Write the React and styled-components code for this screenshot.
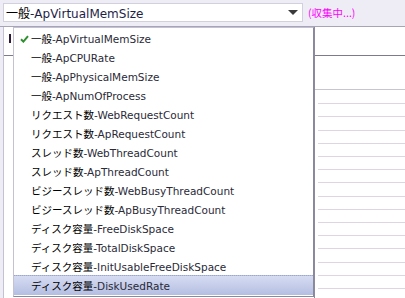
import styled, { createGlobalStyle } from "styled-components";

const GlobalStyle = createGlobalStyle`
  html, body {
    margin: 0;
    padding: 0;
    background: #ffffff;
  }
  body {
    font-family: "DejaVu Sans", "Noto Sans CJK JP", sans-serif;
  }
`;

const items = [
  ["一般", "ApVirtualMemSize"],
  ["一般", "ApCPURate"],
  ["一般", "ApPhysicalMemSize"],
  ["一般", "ApNumOfProcess"],
  ["リクエスト数", "WebRequestCount"],
  ["リクエスト数", "ApRequestCount"],
  ["スレッド数", "WebThreadCount"],
  ["スレッド数", "ApThreadCount"],
  ["ビジースレッド数", "WebBusyThreadCount"],
  ["ビジースレッド数", "ApBusyThreadCount"],
  ["ディスク容量", "FreeDiskSpace"],
  ["ディスク容量", "TotalDiskSpace"],
  ["ディスク容量", "InitUsableFreeDiskSpace"],
  ["ディスク容量", "DiskUsedRate"],
];

const Page = styled.div`
  position: relative;
  width: 405px;
  height: 298px;
  overflow: hidden;
  display: flex;
  flex-direction: column;
`;

const TopBar = styled.div`
  height: 27px;
  flex-shrink: 0;
  box-sizing: border-box;
  background: #eeecf5;
  border-bottom: 1px solid #a6a4b6;
  display: flex;
  align-items: center;
  padding: 0 0 2px 3px;
  gap: 5px;
`;

const SelectBox = styled.div`
  width: 300px;
  height: 19px;
  box-sizing: border-box;
  background: #ffffff;
  border: 1px solid #d2d0dc;
  display: flex;
  align-items: center;
  justify-content: space-between;
  padding: 0 4px 0 2px;
  font-size: 12px;
  color: #1e1e48;
`;

const Arrow = styled.span`
  width: 0;
  height: 0;
  border-left: 5px solid transparent;
  border-right: 5px solid transparent;
  border-top: 5px solid #3a3a3a;
  margin-top: 1px;
`;

const Status = styled.span`
  font-family: "Noto Sans CJK JP", "DejaVu Sans", sans-serif;
  font-size: 10.5px;
  color: #ff00ff;
`;

const Cjk = styled.span`
  font-family: "Noto Sans CJK JP", sans-serif;
  color: #000000;
`;

const Content = styled.div`
  flex: 1;
  display: grid;
  grid-template-columns: 4px 1fr 91px;
`;

const LeftStrip = styled.div`
  background: #eeecf5;
  border-right: 1px solid #c4c2d0;
`;

const Column = styled.div`
  display: flex;
  flex-direction: column;
  border-left: ${(p) => (p.$line ? "1px solid #8c8a9c" : "none")};
`;

const HeadCell = styled.div`
  height: 29px;
  flex-shrink: 0;
  box-sizing: border-box;
  border-bottom: 1px solid #7c7a8c;
  padding: 7px 0 0 5px;
`;

const Marker = styled.div`
  width: 2px;
  height: 9px;
  background: #2c1838;
`;

const SubHead = styled.div`
  height: 34px;
  flex-shrink: 0;
  box-sizing: border-box;
  border-bottom: 1px solid #c8c6cc;
`;

const Rows = styled.div`
  flex: 1;
  margin-left: 3px;
  background: repeating-linear-gradient(
    to bottom,
    transparent 0,
    transparent 12.2px,
    #ddd4e4 12.2px,
    #ddd4e4 13.2px
  );
  background-position: 0 1px;
`;

const Dropdown = styled.ul`
  position: absolute;
  top: 27px;
  left: 13px;
  width: 301px;
  margin: 0;
  padding: 1px 0 1px;
  box-sizing: border-box;
  list-style: none;
  background: #ffffff;
  border: 1px solid #c4c2d2;
  border-right-color: #8a889c;
  border-bottom-color: #8a889c;
`;

const Item = styled.li`
  height: 19px;
  display: flex;
  align-items: center;
  padding-left: 3px;
  font-size: 10.5px;
  color: #2a2a38;
  white-space: nowrap;
  background: ${(p) =>
    p.$active ? "linear-gradient(to bottom, #d6dcf2, #b4bee2)" : "transparent"};
  border-top: 1px dotted ${(p) => (p.$active ? "#9ea6cc" : "transparent")};
  margin-top: -1px;
`;

const Check = styled.span`
  width: 14px;
  display: inline-flex;
  justify-content: center;
`;

const CheckIcon = () => (
  <svg width="9" height="8" viewBox="0 0 9 8">
    <path d="M1 4.2 L3.4 6.6 L8 1.2" stroke="#2f8f2f" strokeWidth="2" fill="none" />
  </svg>
);

export default function App() {
  return (
    <>
      <GlobalStyle />
      <Page>
        <TopBar>
          <SelectBox>
            <span>
              <Cjk>一般</Cjk>-ApVirtualMemSize
            </span>
            <Arrow />
          </SelectBox>
          <Status>(収集中...)</Status>
        </TopBar>
        <Content>
          <LeftStrip />
          <Column>
            <HeadCell>
              <Marker />
            </HeadCell>
          </Column>
          <Column $line>
            <HeadCell />
            <SubHead />
            <Rows />
          </Column>
        </Content>
        <Dropdown>
          {items.map(([group, name], i) => (
            <Item key={name} $active={i === items.length - 1}>
              <Check>{i === 0 ? <CheckIcon /> : null}</Check>
              <Cjk>{group}</Cjk>-{name}
            </Item>
          ))}
        </Dropdown>
      </Page>
    </>
  );
}
